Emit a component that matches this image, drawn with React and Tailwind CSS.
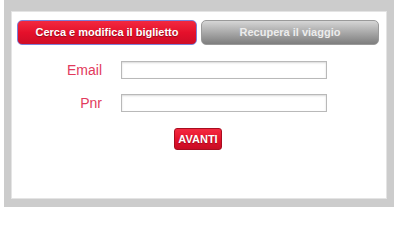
import React from 'react';

export default function App() {
  return (
    <div className="w-[400px] h-[210px] bg-white" style={{ fontFamily: '"Liberation Sans", Arial, sans-serif' }}>
      <div className="ml-[4px] w-[390px] h-[207px] border-[#cccccc] border-x-[7px] border-t-[11px] border-b-[8px]">
        <div className="h-full border border-[#e4e4e4] bg-white px-[5px] pt-[8px]">
          {/* tabs */}
          <div className="flex gap-[4px] pr-[2px]">
            <button className="w-[180px] h-[25px] rounded-[5px] border border-[#7d7fd6] bg-gradient-to-b from-[#f2283f] via-[#e5102b] to-[#cf0d26] text-[11px] font-bold text-white [text-shadow:0_1px_1px_rgba(0,0,0,0.35)]">
              Cerca e modifica il biglietto
            </button>
            <button className="w-[178px] h-[25px] rounded-[5px] border border-[#9a9a9a] bg-gradient-to-b from-[#d6d6d6] via-[#a9a9a9] to-[#7e7e7e] text-[11px] font-bold text-[#ececec]">
              Recupera il viaggio
            </button>
          </div>

          {/* form */}
          <div className="mt-[16px] flex flex-col gap-[15px]">
            <div className="flex items-center gap-[19px]">
              <label className="w-[85px] text-right text-[14px] leading-none text-[#e23a5c]">Email</label>
              <input className="w-[206px] h-[18px] border border-[#b9b9b9] bg-white shadow-[inset_0_1px_2px_rgba(0,0,0,0.15)] outline-none" />
            </div>
            <div className="flex items-center gap-[19px]">
              <label className="w-[85px] text-right text-[14px] leading-none text-[#e23a5c]">Pnr</label>
              <input className="w-[206px] h-[18px] border border-[#b9b9b9] bg-white shadow-[inset_0_1px_2px_rgba(0,0,0,0.15)] outline-none" />
            </div>
          </div>

          <div className="mt-[16px] flex justify-center pr-[2px]">
            <button className="h-[22px] px-[3px] rounded-[3px] border border-[#a80d20] bg-gradient-to-b from-[#f3293f] via-[#e5122c] to-[#c80c24] text-[11px] font-bold text-white [text-shadow:0_1px_1px_rgba(0,0,0,0.3)]">
              AVANTI
            </button>
          </div>
        </div>
      </div>
    </div>
  );
}
